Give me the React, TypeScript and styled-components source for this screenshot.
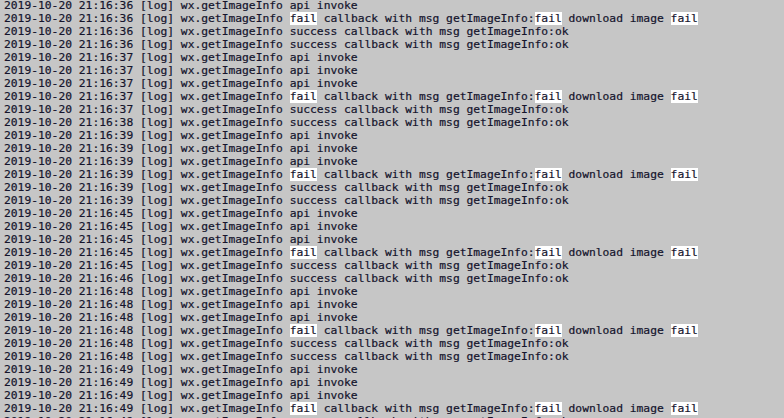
import React from "react";
import styled, { createGlobalStyle } from "styled-components";

const GlobalStyle = createGlobalStyle`
  html, body {
    margin: 0;
    padding: 0;
    background: #c6c6c6;
    overflow: hidden;
  }
`;

// 터미널 영역
const Terminal = styled.div`
  width: 784px;
  height: 418px;
  overflow: hidden;
  background: #c6c6c6;
  padding: 0 0 0 4px;
  box-sizing: border-box;
  font-family: "DejaVu Sans Mono", "Liberation Mono", monospace;
  font-size: 11.3px;
  line-height: 13px;
  color: #14142c;
  -webkit-text-stroke: 0.2px #14142c;
`;

const Lines = styled.div`
  margin-top: -1px;
`;

const Line = styled.div`
  white-space: pre;
  height: 13px;
`;

const Mark = styled.span`
  background: #ffffff;
`;

type Kind = "invoke" | "fail" | "success";

const rows: [string, Kind][] = [
  ["36", "invoke"],
  ["36", "fail"],
  ["36", "success"],
  ["36", "success"],
  ["37", "invoke"],
  ["37", "invoke"],
  ["37", "invoke"],
  ["37", "fail"],
  ["37", "success"],
  ["38", "success"],
  ["39", "invoke"],
  ["39", "invoke"],
  ["39", "invoke"],
  ["39", "fail"],
  ["39", "success"],
  ["39", "success"],
  ["45", "invoke"],
  ["45", "invoke"],
  ["45", "invoke"],
  ["45", "fail"],
  ["45", "success"],
  ["46", "success"],
  ["48", "invoke"],
  ["48", "invoke"],
  ["48", "invoke"],
  ["48", "fail"],
  ["48", "success"],
  ["48", "success"],
  ["49", "invoke"],
  ["49", "invoke"],
  ["49", "invoke"],
  ["49", "fail"],
  ["49", "success"],
];

const LogLine = ({ sec, kind }: { sec: string; kind: Kind }) => {
  const prefix = `2019-10-20 21:16:${sec} [log] wx.getImageInfo `;
  if (kind === "invoke") return <Line>{prefix}api invoke</Line>;
  if (kind === "success")
    return <Line>{prefix}success callback with msg getImageInfo:ok</Line>;
  return (
    <Line>
      {prefix}
      <Mark>fail</Mark> callback with msg getImageInfo:<Mark>fail</Mark> download image{" "}
      <Mark>fail</Mark>
    </Line>
  );
};

const App = () => {
  return (
    <>
      <GlobalStyle />
      <Terminal>
        <Lines>
          {rows.map(([sec, kind], i) => (
            <LogLine key={i} sec={sec} kind={kind} />
          ))}
        </Lines>
      </Terminal>
    </>
  );
};

export default App;
